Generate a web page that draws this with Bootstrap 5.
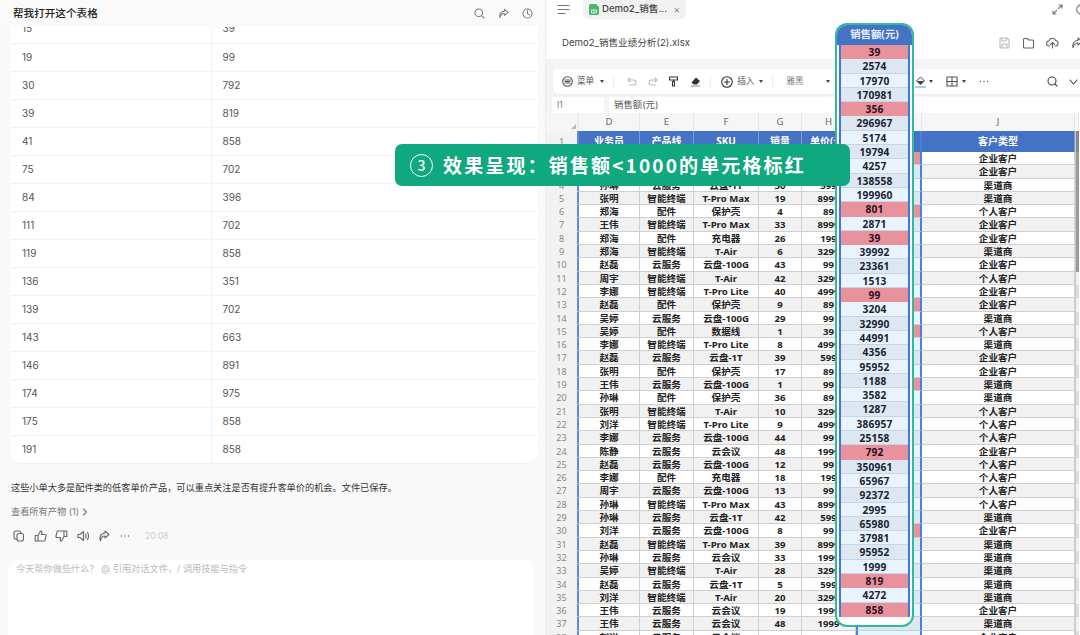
<!DOCTYPE html>
<html lang="zh">
<head>
<meta charset="utf-8">
<title>表格</title>
<link rel="stylesheet" href="https://cdn.jsdelivr.net/npm/bootstrap@5.3.0/dist/css/bootstrap.min.css">
<style>
html,body{height:635px;overflow:hidden}
body{position:relative;font-family:"Inter","Noto Sans CJK SC",sans-serif;font-size:9.2px;color:#333;background:#fff}
svg{display:block;flex:none}
.ic{fill:none;stroke:currentColor;stroke-width:1.1;stroke-linecap:round;stroke-linejoin:round}
.x-left{width:546px;height:635px;background:#f9f9f9;border-right:1px solid #eee;flex:none;overflow:hidden}
.x-title{height:27px;padding:0 13px;background:#fafafa;position:relative;z-index:2}
.x-title b{font-size:10.6px;font-weight:500;color:#222}
.x-title .x-ics{color:#777;gap:13px;margin-right:-1px}
.x-tblwrap{margin:-12px 8px 0 11px;background:#fff;border-radius:0 0 10px 10px;overflow:hidden;border-bottom:1px solid #f0f0f0}
.x-tbl{table-layout:fixed;--bs-table-bg:#fff;--bs-table-border-color:#f2f2f2}
.x-tbl td{height:28px;padding:0 11px;font-size:10px;color:#555;vertical-align:middle;box-sizing:border-box}
.x-tbl td:first-child{width:200px;border-right:1px solid #f2f2f2}
.x-tbl tr:last-child td{border-bottom:0}
.x-say{margin:18px 0 0 11px;font-size:9.2px;color:#333;line-height:12px}
.x-more{margin:12px 0 0 11px;color:#777;line-height:12px;gap:3px}
.x-acts{margin:11px 0 0 13px;color:#666;height:14px}
.x-acts svg{margin-right:8.5px}
.x-acts span{color:#ccc;font-size:8.5px;margin-left:6px}
.x-input{margin:17px 11px 0 8px;height:90px;background:#fff;border-radius:10px;padding:3px 8px;color:#bbb;line-height:12px}
.x-right{flex:1;min-width:0;height:635px;background:#fff;overflow:hidden}
.x-tabs{height:27px;padding-left:11px;color:#777}
.x-tab{width:103px;height:19px;margin:0 0 8px 13px;background:#f1f1f1;border-radius:0 0 6px 6px;padding:0 6px 0 6px;color:#444;font-size:9.6px;font-weight:500;gap:3px}
.x-tab i{font-style:normal;font-weight:400;color:#888;margin-left:auto;font-size:10px}
.x-file{height:32px;padding-left:16px;font-size:9.6px;color:#444}
.x-filei{gap:11px;color:#666;margin-right:-3px}
.x-gap{background:#f4f4f4;padding:10px 0 3px 7px}
.x-bar{height:25px;background:#fff;border-radius:5px 0 0 5px;box-shadow:0 1px 2px rgba(0,0,0,.05);padding-left:9px;color:#555;font-size:8.6px}
.x-sep{width:1px;height:13px;background:#eee}
.x-car{width:0;height:0;border:2.2px solid transparent;border-top:3px solid #444;border-bottom:0}
.x-form{height:16px;background:#f4f4f4;padding-left:6px;gap:5px;font-size:9.4px;color:#555}
.x-form div{height:16px;background:#fff;padding-left:5px;line-height:16px}
.x-sheet{font-family:"Noto Sans","Noto Sans CJK SC",sans-serif}
.x-r{display:grid;grid-template-columns:33px 61px 54px 65px 43px 54px 66px 153px 4px;height:13.31px;line-height:13px;font-size:9.6px;font-weight:700;color:#222}
.x-r>div{text-align:center;border-right:1px solid #d0d0d0;border-bottom:1px solid #cfcfcf;overflow:hidden;white-space:nowrap;background:#fff}
.x-r.x-odd>div{background:#f1f1f1}
.x-r>.x-n{font-weight:400;color:#888;font-size:9px;background:#f2f2f2;border-right:2px solid #5b8bdc;border-bottom-color:#f2f2f2}
.x-r.x-odd>.x-n{background:#f2f2f2}
.x-r>.x-sc{background:#ddd;border:0;border-left:1px solid #ccc}
.x-r>.x-i{background:#e3f6fb;border-left:2px solid #4a7fe0;border-right:2px solid #4a7fe0}
.x-r.x-odd>.x-i{background:#dbe9ee}
.x-r>.x-i.x-red{background:#e8929b}
.x-hd{height:18px;line-height:18px;font-weight:400;color:#666;font-size:9.6px}
.x-hd>div,.x-hd.x-r>div{background:#f6f6f6;border-color:#e6e6e6;border-bottom:0}
.x-hd>.x-dk{background:#666;color:#ddd;text-align:right;font-size:7px;padding-right:1px}
.x-r1{height:21px;line-height:21px;font-size:10px;color:#fff}
.x-r1>div{background:#4472c4;border-color:#7e9bd6;border-bottom:0}
.x-r1>.x-sc{background:#888}
.x-r1>.x-i{background:#4472c4}
.x-hl{position:absolute;left:835px;top:23px;width:79px;height:604px;border:2px solid #2fb9a0;border-radius:12px;background:#fff;overflow:hidden;font-family:"Noto Sans","Noto Sans CJK SC",sans-serif;z-index:3}
.x-hlh{height:20px;line-height:19px;background:#4472c4;color:#e8f0ff;text-align:center;font-size:10.4px;font-weight:700}
.x-hlb{margin:0 2px;border-left:2px solid #3f78de;border-right:2px solid #3f78de;height:572px}
.x-hlb div{height:14.3px;line-height:14px;text-align:center;font-weight:700;font-size:10.2px;color:#1a2233;background:#e8f3fd;border-bottom:1px solid #c6d6e4;letter-spacing:.2px}
.x-hlb div:nth-child(even){background:#dce7f1}
.x-hlb div.x-red{background:#e8929b;border-bottom-color:#e8929b;color:#2a1020}
.x-ban{position:absolute;left:395px;top:144px;width:455px;height:42px;background:#10a87f;border-radius:7px;color:#fff;z-index:4;padding-left:15px;gap:10px;font-family:"Noto Sans CJK SC",sans-serif;font-weight:700;font-size:19px;letter-spacing:2.15px;white-space:nowrap}
.x-cir{width:23px;height:23px;border:1px solid #fff;border-radius:50%;font-size:14px;letter-spacing:0;line-height:20px;text-align:center;font-weight:500;flex:none}
</style>
</head>
<body>
<div class="d-flex">
  <section class="x-left">
    <div class="x-title d-flex align-items-center justify-content-between">
      <b>帮我打开这个表格</b>
      <div class="x-ics d-flex align-items-center">
        <svg class="ic" width="11" height="11" viewBox="0 0 12 12"><circle cx="5.2" cy="5.2" r="4.2"/><path d="M8.3 8.3 11 11"/></svg>
        <svg class="ic" width="11" height="11" viewBox="0 0 12 12"><path d="M7 1.5 11 4.8 7 8V6C4.5 6 3 7.5 2 10.5 1 6.5 3.5 3.6 7 3.5Z"/></svg>
        <svg class="ic" width="11" height="11" viewBox="0 0 12 12"><circle cx="6" cy="6" r="5"/><path d="M6 3v3.2l2 1.3"/></svg>
      </div>
    </div>
    <div class="x-tblwrap">
      <table class="table x-tbl mb-0">
        <tbody>
          <tr><td>15</td><td>39</td></tr>
          <tr><td>19</td><td>99</td></tr>
          <tr><td>30</td><td>792</td></tr>
          <tr><td>39</td><td>819</td></tr>
          <tr><td>41</td><td>858</td></tr>
          <tr><td>75</td><td>702</td></tr>
          <tr><td>84</td><td>396</td></tr>
          <tr><td>111</td><td>702</td></tr>
          <tr><td>119</td><td>858</td></tr>
          <tr><td>136</td><td>351</td></tr>
          <tr><td>139</td><td>702</td></tr>
          <tr><td>143</td><td>663</td></tr>
          <tr><td>146</td><td>891</td></tr>
          <tr><td>174</td><td>975</td></tr>
          <tr><td>175</td><td>858</td></tr>
          <tr><td>191</td><td>858</td></tr>
        </tbody>
      </table>
    </div>
    <p class="x-say mb-0">这些小单大多是配件类的低客单价产品，可以重点关注是否有提升客单价的机会。文件已保存。</p>
    <div class="x-more d-flex align-items-center">查看所有产物 (1)
      <svg class="ic" width="6" height="8" viewBox="0 0 6 8"><path d="M1.5 1 4.5 4 1.5 7"/></svg>
    </div>
    <div class="x-acts d-flex align-items-center">
      <svg class="ic" width="12" height="12" viewBox="0 0 12 12"><rect x="1" y="1" width="7" height="8" rx="2"/><rect x="4" y="3.5" width="6.5" height="7.5" rx="2" fill="#f9f9f9"/></svg>
      <svg class="ic" width="13" height="12" viewBox="0 0 13 12"><path d="M4 5.5 6.5 1c1.2 0 1.6 1 1.3 2L7.4 4.5H11c.8 0 1.2.6 1 1.4l-1 4.2c-.2.6-.6.9-1.2.9H4ZM4 5.5H1.2V11H4"/></svg>
      <svg class="ic" width="13" height="12" viewBox="0 0 13 12"><path d="M9 6.5 6.5 11c-1.2 0-1.6-1-1.3-2l.4-1.5H2C1.200 7.500.8 6.900 1 6.100L2 1.900C2.200 1.300 2.600 1 3.200 1H9ZM9 6.500h2.800V1H9"/></svg>
      <svg class="ic" width="13" height="12" viewBox="0 0 13 12"><path d="M1 4.500H3L6.500 1.500V10.500L3 7.500H1ZM8.500 4c.7 1.200.7 2.800 0 4M10.500 2.500c1.300 2.200 1.300 4.800 0 7"/></svg>
      <svg class="ic" width="12" height="12" viewBox="0 0 12 12"><path d="M7 1 11 4.500 7 8V6C4.500 6 3 7.500 2.500 11 .5 6.500 3.500 3.300 7 3Z"/></svg>
      <svg width="12" height="12" viewBox="0 0 12 12" fill="currentColor"><circle cx="2.500" cy="6" r=".7"/><circle cx="6" cy="6" r=".7"/><circle cx="9.500" cy="6" r=".7"/></svg>
      <span>20:08</span>
    </div>
    <div class="x-input">今天帮你做些什么？ @ 引用对话文件，/ 调用技能与指令</div>
  </section>

  <section class="x-right">
    <div class="x-tabs d-flex align-items-start">
      <svg class="ic mt-1" width="13" height="11" viewBox="0 0 13 11"><path d="M1 1.500H12M1 5.500H12M1 9.500H8"/></svg>
      <div class="x-tab d-flex align-items-center">
        <svg width="10" height="11" viewBox="0 0 10 11"><path d="M1.500 0H7L10 3V9.500A1.500 1.500 0 0 1 8.500 11H1.500A1.500 1.500 0 0 1 0 9.500V1.500A1.500 1.500 0 0 1 1.500 0Z" fill="#4bb56c"/><path d="M2.500 6H7.500V9H2.500ZM5 6V9" stroke="#fff" stroke-width=".8" fill="none"/></svg>
        <span>Demo2_销售...</span><i>×</i>
      </div>
      <div class="ms-auto d-flex align-items-center" style="gap:13px;margin-top:4px;margin-right:-7px">
        <svg class="ic" width="11" height="11" viewBox="0 0 11 11"><path d="M6.500 4.500 10 1M7 1H10V4M4.500 6.500 1 10M1 7V10H4"/></svg>
        <svg class="ic" width="11" height="11" viewBox="0 0 11 11"><circle cx="5.500" cy="5.500" r="4.800"/></svg>
      </div>
    </div>
    <div class="x-file d-flex align-items-center justify-content-between">
      <span>Demo2_销售业绩分析(2).xlsx</span>
      <div class="x-filei d-flex align-items-center">
        <svg class="ic" width="13" height="12" viewBox="0 0 13 12" style="color:#bbb"><path d="M2.500 1H9L11 3V10A1 1 0 0 1 10 11H3A1 1 0 0 1 2 10V1.500ZM4 1V4H8V1M4 11V7H9V11"/></svg>
        <svg class="ic" width="13" height="12" viewBox="0 0 13 12"><path d="M1.500 10V2.500A1 1 0 0 1 2.500 1.500H5L6.500 3H10.500A1 1 0 0 1 11.500 4V10A1 1 0 0 1 10.500 11H2.500A1 1 0 0 1 1.500 10Z"/></svg>
        <svg class="ic" width="13" height="12" viewBox="0 0 13 12"><path d="M4 9H3A2.500 2.500 0 0 1 3 4 3.500 3.500 0 0 1 9.700 3.500 2.800 2.800 0 0 1 10 9H9M6.500 11V5.500M4.500 7.500 6.500 5.500 8.500 7.500"/></svg>
        <svg class="ic" width="13" height="12" viewBox="0 0 13 12"><path d="M8 1 12 4.500 8 8V6C5.500 6 4 7.500 3 10.500 2 6.500 4.500 3.500 8 3.200Z"/></svg>
      </div>
    </div>
    <div class="x-gap">
      <div class="x-bar d-flex align-items-center">
        <svg class="ic me-1" width="11" height="11" viewBox="0 0 11 11"><circle cx="5.500" cy="5.500" r="4.800"/><path d="M3 4H8M3 5.500H8M3 7H8"/></svg>
        <span>菜单</span><span class="x-car" style="margin:0 9px 0 6px"></span><span class="x-sep"></span>
        <svg class="ic" width="10" height="10" viewBox="0 0 10 10" style="color:#bbb;margin-left:13px"><path d="M3 1 1 3 3 5M1 3H6.500A2.500 2.500 0 0 1 6.500 8H2.500"/></svg>
        <svg class="ic" width="10" height="10" viewBox="0 0 10 10" style="color:#bbb;margin-left:11px"><path d="M7 1 9 3 7 5M9 3H3.500A2.500 2.500 0 0 0 3.500 8H7.500"/></svg>
        <svg class="ic" width="11" height="11" viewBox="0 0 11 11" style="margin-left:10px;color:#333"><path d="M1.500 1H9.500V4H1.500ZM5.500 4V5.500M4.500 5.500H6.500V10H4.500Z"/></svg>
        <svg width="11" height="11" viewBox="0 0 11 11" style="margin-left:11px"><path d="M1.500 6.500 6 1.500 10 5 7 8.500H3.500Z" fill="#333"/><path d="M1 10H10" stroke="#888"/></svg>
        <span class="x-sep" style="margin-left:9px"></span>
        <svg class="ic" width="12" height="12" viewBox="0 0 12 12" style="margin-left:10px;color:#333"><circle cx="6" cy="6" r="5.300"/><path d="M3.500 6H8.500M6 3.500V8.500"/></svg>
        <span style="margin-left:4px">插入</span><span class="x-car" style="margin:0 9px 0 5px"></span><span class="x-sep"></span>
        <span style="margin-left:13px;color:#777">雅黑</span><span class="x-car" style="margin-left:22px"></span>
        <span class="ms-auto d-flex align-items-center" style="margin-right:0">
          <svg width="11" height="12" viewBox="0 0 11 12" style="margin-right:3px"><path d="M5.500 1 9.500 5 5.500 8.500 1.500 5Z" fill="none" stroke="#444"/><path d="M2 5H9L5.500 8.500Z" fill="#444"/><path d="M0 11H11" stroke="#6db4e0" stroke-width="1.200"/></svg>
          <span class="x-car" style="margin-right:13px"></span>
          <svg class="ic" width="12" height="11" viewBox="0 0 12 11" style="color:#555"><rect x="1" y="1" width="10" height="9"/><path d="M6 1V10M1 5.500H11"/></svg>
          <span class="x-car" style="margin:0 13px 0 4px"></span>
          <svg width="10" height="3" viewBox="0 0 10 3" fill="#555" style="margin-right:58px"><circle cx="1.500" cy="1.500" r=".7"/><circle cx="5" cy="1.500" r=".7"/><circle cx="8.500" cy="1.500" r=".7"/></svg>
          <svg class="ic" width="11" height="11" viewBox="0 0 11 11" style="margin-right:11px;color:#444"><circle cx="5" cy="5" r="4"/><path d="M8 8 10 10"/></svg>
          <svg class="ic" width="9" height="6" viewBox="0 0 9 6" style="margin-right:2px;color:#444"><path d="M1 1 4.500 5 8 1"/></svg>
        </span>
      </div>
    </div>
    <div class="x-form d-flex">
      <div style="width:52px;flex:none;font-size:8.400px;color:#777">I1</div>
      <div class="flex-fill">销售额(元)</div>
    </div>
    <div class="x-sheet" id="sheet"></div>
  </section>
</div>

<div class="x-hl">
  <div class="x-hlh">销售额(元)</div>
  <div class="x-hlb" id="hl"></div>
</div>

<div class="x-ban d-flex align-items-center">
  <span class="x-cir">3</span>
  <span>效果呈现：销售额&lt;1000的单元格标红</span>
</div>

<script>
var A=['孙琳,云服务,云盘-1T,30,599,渠道商','张明,智能终端,T-Pro Max,19,8999,渠道商','郑海,配件,保护壳,4,89,个人客户','王伟,智能终端,T-Pro Max,33,8999,企业客户','郑海,配件,充电器,26,199,企业客户','郑海,智能终端,T-Air,6,3299,渠道商','赵磊,云服务,云盘-100G,43,99,企业客户','周宇,智能终端,T-Air,42,3299,个人客户','李娜,智能终端,T-Pro Lite,40,4999,企业客户','赵磊,配件,保护壳,9,89,企业客户','吴婷,云服务,云盘-100G,29,99,渠道商','吴婷,配件,数据线,1,39,个人客户','李娜,智能终端,T-Pro Lite,8,4999,渠道商','赵磊,云服务,云盘-1T,39,599,企业客户','张明,配件,保护壳,17,89,企业客户','王伟,云服务,云盘-100G,1,99,渠道商','孙琳,配件,保护壳,36,89,渠道商','张明,智能终端,T-Air,10,3299,个人客户','刘洋,智能终端,T-Pro Lite,9,4999,个人客户','李娜,云服务,云盘-100G,44,99,个人客户','陈静,云服务,云会议,48,1999,企业客户','赵磊,云服务,云盘-100G,12,99,个人客户','李娜,配件,充电器,18,199,个人客户','周宇,云服务,云盘-100G,13,99,个人客户','孙琳,智能终端,T-Pro Max,43,8999,个人客户','孙琳,云服务,云盘-1T,42,599,渠道商','刘洋,云服务,云盘-100G,8,99,企业客户','赵磊,智能终端,T-Pro Max,39,8999,渠道商','孙琳,云服务,云会议,33,1999,渠道商','吴婷,智能终端,T-Air,28,3299,渠道商','赵磊,云服务,云盘-1T,5,599,渠道商','刘洋,智能终端,T-Air,20,3299,渠道商','王伟,云服务,云会议,19,1999,企业客户','王伟,云服务,云会议,48,1999,渠道商','刘洋,云服务,云会议,1,1999,企业客户'];
var rows=['李娜,配件,数据线,1,39,企业客户','吴婷,云服务,云盘-100G,26,99,企业客户'].concat(A).map(function(s){return s.split(',')});
var redI={2:1,6:1,13:1,15:1,19:1,30:1};
var h='<div class="x-r x-hd"><div class="x-n" style="border-right-color:#eee"><svg width="33" height="18" viewBox="0 0 33 18"><path d="M30 11V16H25Z" fill="#bbb"/></svg></div>';
['D','E','F','G','H'].forEach(function(c){h+='<div>'+c+'</div>'});
h+='<div class="x-dk">⋮</div><div>J</div><div></div></div>';
h+='<div class="x-r x-r1"><div class="x-n">1</div><div>业务员</div><div>产品线</div><div>SKU</div><div>销量</div><div>单价(元)</div><div class="x-i">销售额(元)</div><div>客户类型</div><div class="x-sc"></div></div>';
rows.forEach(function(r,k){var n=k+2,odd=n%2?' x-odd':'';
 h+='<div class="x-r'+odd+'"><div class="x-n">'+n+'</div>';
 for(var i=0;i<5;i++)h+='<div>'+r[i]+'</div>';
 h+='<div class="x-i'+(redI[n]?' x-red':'')+'">'+(r[3]*r[4])+'</div><div>'+r[5]+'</div><div class="x-sc"'+(n<11?' style="background:#999"':'')+'></div></div>';});
document.getElementById('sheet').innerHTML=h;
var v=[39];rows.slice(1).forEach(function(r){v.push(r[3]*r[4])});
v=[39,2574].concat(rows.slice(2).map(function(r){return r[3]*r[4]}));
v=v.concat([819,4272,858]);
document.getElementById('hl').innerHTML=v.slice(0,40).map(function(x){return '<div'+(x<1000?' class="x-red"':'')+'>'+x+'</div>'}).join('');
</script>
<script src="https://cdn.jsdelivr.net/npm/bootstrap@5.3.0/dist/js/bootstrap.bundle.min.js"></script>
</body>
</html>
